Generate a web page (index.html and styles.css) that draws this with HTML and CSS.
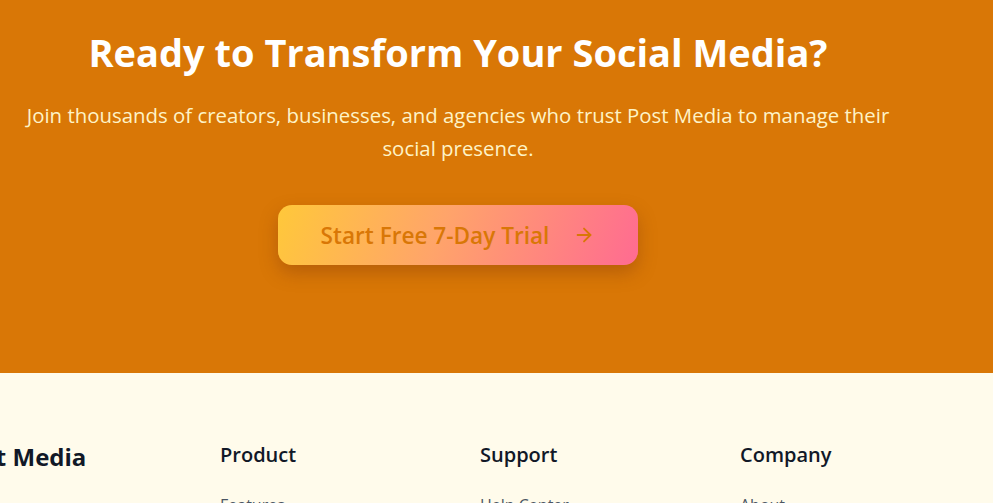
FILE: index.html
```html
<!DOCTYPE html>
<html lang="en">
<head>
<meta charset="utf-8">
<title>Post Media</title>
<link rel="stylesheet" href="styles.css">
</head>
<body>
<section class="cta">
  <div class="cta-inner">
    <h2 class="cta-title">Ready to Transform Your Social Media?</h2>
    <p class="cta-text">Join thousands of creators, businesses, and agencies who trust Post Media to manage their social presence.</p>
    <a class="cta-btn" href="#">
      <span>Start Free 7-Day Trial</span>
      <svg class="cta-arrow" viewBox="0 0 24 24" width="22" height="22" fill="none" stroke="currentColor" stroke-width="2" stroke-linecap="round" stroke-linejoin="round"><path d="M5 12h14"/><path d="M12 5l7 7-7 7"/></svg>
    </a>
  </div>
</section>
<footer class="footer">
  <div class="footer-grid">
    <div class="footer-col">
      <div class="brand">Post Media</div>
    </div>
    <div class="footer-col">
      <h3 class="footer-head">Product</h3>
      <ul class="footer-links"><li>Features</li><li>Pricing</li></ul>
    </div>
    <div class="footer-col">
      <h3 class="footer-head">Support</h3>
      <ul class="footer-links"><li>Help Center</li><li>Contact</li></ul>
    </div>
    <div class="footer-col">
      <h3 class="footer-head">Company</h3>
      <ul class="footer-links"><li>About</li><li>Blog</li></ul>
    </div>
  </div>
</footer>
</body>
</html>
```
FILE: styles.css
```css
* { box-sizing: border-box; }
html, body { margin: 0; padding: 0; overflow: hidden; }
body {
  font-family: "Open Sans", "Noto Sans", "Liberation Sans", sans-serif;
  background: #fffbeb;
}
.cta {
  background: #d97706;
  height: 373px;
  padding-top: 32px;
}
.cta-inner {
  width: 916px;
  display: flex;
  flex-direction: column;
  align-items: center;
  text-align: center;
}
.cta-title {
  margin: 0 0 27px;
  font-size: 38px;
  line-height: 40px;
  font-weight: 700;
  color: #ffffff;
}
.cta-text {
  margin: 0 0 41px;
  width: 900px;
  font-size: 20.4px;
  line-height: 32.5px;
  color: #fef3c7;
}
.cta-btn {
  display: flex;
  align-items: center;
  justify-content: center;
  gap: 24px;
  width: 360px;
  height: 60px;
  border-radius: 14px;
  background: linear-gradient(110deg, #ffc83a 0%, #ffa46a 45%, #ff6b91 100%);
  box-shadow: 0 8px 18px rgba(120, 53, 15, 0.35);
  color: #d97706;
  font-size: 22.6px;
  font-weight: 600;
  text-decoration: none;
}
.cta-arrow { flex: none; }
.footer {
  padding-top: 68px;
}
.footer-grid {
  display: grid;
  grid-template-columns: repeat(4, 228px);
  column-gap: 32px;
  margin-left: -40px;
}
.brand {
  font-size: 24px;
  line-height: 32px;
  font-weight: 700;
  color: #111827;
  margin-left: -6px;
}
.footer-head {
  margin: 0 0 24px;
  font-size: 20px;
  line-height: 28px;
  font-weight: 600;
  color: #111827;
}
.footer-links {
  list-style: none;
  margin: 0;
  padding: 0;
  font-size: 16px;
  line-height: 24px;
  color: #4b5563;
}
```
